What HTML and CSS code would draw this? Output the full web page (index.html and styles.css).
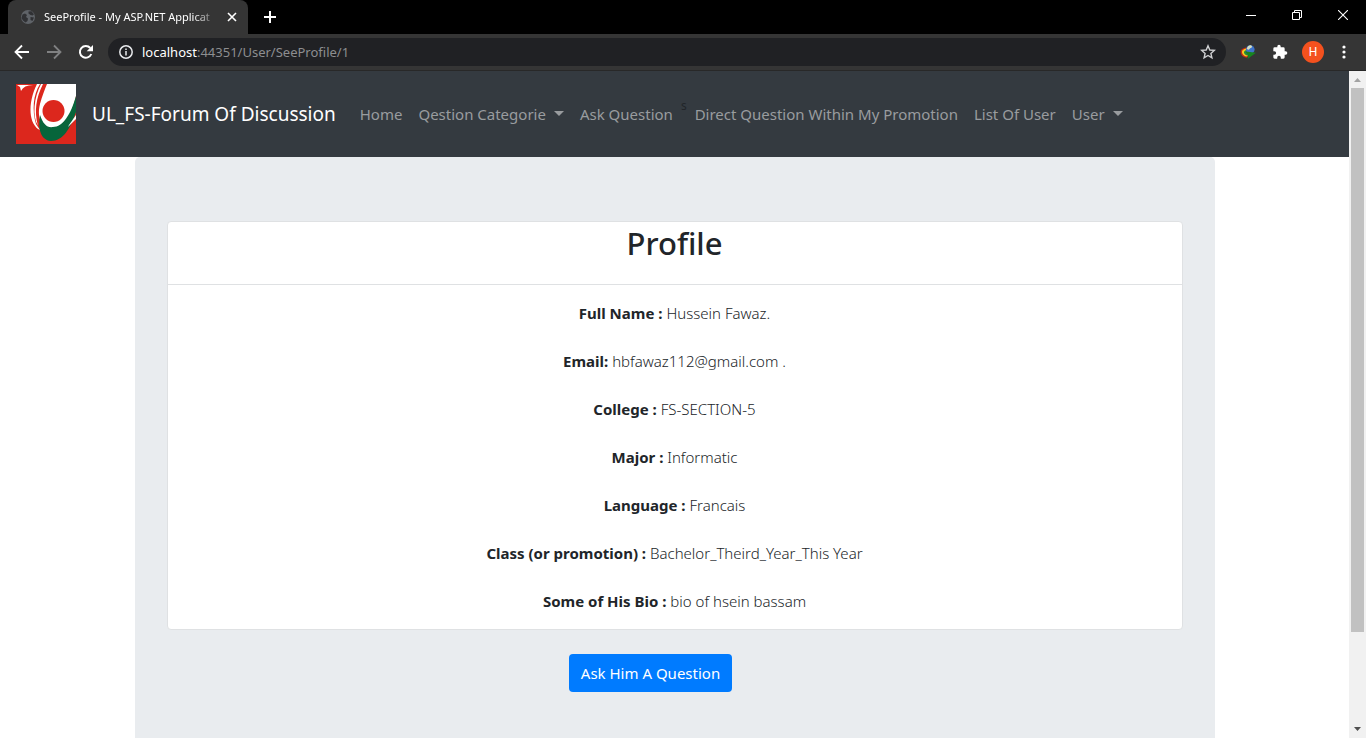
FILE: index.html
```html
<!DOCTYPE html>
<html lang="en">
<head>
<meta charset="utf-8">
<title>SeeProfile - My ASP.NET Application</title>
<link rel="stylesheet" href="styles.css">
</head>
<body>
<header class="browser">
  <div class="tabstrip">
    <div class="tab">
      <svg class="globe" viewBox="0 0 16 16" width="16" height="16"><circle cx="8" cy="8" r="7" fill="#5f6368"/><path d="M2.500 5.500L5 4.500l2 1.500-1 2 2 1.500-.5 2.500-2 1.500-2.500-2L1.500 9zM8.500 2.500l3-.3 2.500 3-1.500 1.300-2-.5-2-1.500zM10.500 8l3.500.5-1.500 3.500-2-1z" fill="#303134"/></svg>
      <span class="tab-title">SeeProfile - My ASP.NET Applicat</span>
      <button class="icon-btn" aria-label="Close tab"><svg viewBox="0 0 10 10" width="10" height="10"><path d="M1 1l8 8M9 1L1 9" stroke="#fff" stroke-width="1.600"/></svg></button>
    </div>
    <button class="icon-btn new-tab" aria-label="New tab"><svg viewBox="0 0 12 12" width="12" height="12"><path d="M6 0v12M0 6h12" stroke="#fff" stroke-width="2"/></svg></button>
    <div class="window-controls">
      <button class="icon-btn" aria-label="Minimize"><svg viewBox="0 0 10 10" width="10" height="10"><path d="M0 5.500h10" stroke="#fff"/></svg></button>
      <button class="icon-btn" aria-label="Restore"><svg viewBox="0 0 10 10" width="10" height="10"><path d="M.5 2.500h7v7h-7zM2.500 2.500v-2h7v7h-2" fill="none" stroke="#fff"/></svg></button>
      <button class="icon-btn" aria-label="Close window"><svg viewBox="0 0 10 10" width="10" height="10"><path d="M0 0l10 10M10 0L0 10" stroke="#fff" stroke-width="1.100"/></svg></button>
    </div>
  </div>
  <div class="toolbar">
    <button class="icon-btn" aria-label="Back"><svg viewBox="0 0 16 16" width="16" height="16"><path d="M15 8H2M8 1.500L1.500 8 8 14.500" fill="none" stroke="#fff" stroke-width="1.800"/></svg></button>
    <button class="icon-btn" aria-label="Forward"><svg viewBox="0 0 16 16" width="16" height="16"><path d="M1 8h13M8 1.500L14.500 8 8 14.500" fill="none" stroke="#808182" stroke-width="1.800"/></svg></button>
    <button class="icon-btn" aria-label="Reload"><svg viewBox="0 0 16 16" width="16" height="16"><path d="M13.300 10A5.900 5.900 0 1 1 12.300 4" fill="none" stroke="#fff" stroke-width="2"/><path d="M15 1v6.300H8.700z" fill="#fff"/></svg></button>
    <div class="address">
      <svg viewBox="0 0 14 14" width="14" height="14"><circle cx="7" cy="7" r="6.200" fill="none" stroke="#e8eaed" stroke-width="1.500"/><path d="M7 6v4.500M7 3.400v1.500" stroke="#e8eaed" stroke-width="1.500"/></svg>
      <span class="url"><b>localhost</b>:44351/User/SeeProfile/1</span>
      <button class="icon-btn" aria-label="Bookmark"><svg viewBox="0 0 16 16" width="16" height="16"><path d="M8 1.800l1.800 4.200 4.500.4-3.400 3 1 4.400L8 11.500l-3.900 2.300 1-4.400-3.400-3 4.500-.4z" fill="none" stroke="#d0d1d3" stroke-width="1.400"/></svg></button>
    </div>
    <div class="extensions">
      <button class="icon-btn" aria-label="Download manager"><svg viewBox="0 0 16 16" width="16" height="16"><path d="M6.500 3.500C2 4 .5 6 .7 8.500c.3 3 3 5 6.300 5.200l1.500-2C5 11.500 3 9 6.500 6z" fill="#c32a15"/><path d="M6.500 4.500C3 5 1.800 6.500 2 8.400c.3 2.200 2.500 3.700 5 4.200l1-1.800C5 10 4.300 8 6.500 6.500z" fill="#f2ca20"/><path d="M6.500 6c-2 .6-2.800 1.500-2.400 3 .5 1.500 2 2.200 3.400 2.600l1-1.600C6 9 6 8 7 7z" fill="#228a3c"/><circle cx="10.300" cy="5.500" r="4.300" fill="#3f74cb"/><path d="M8 2.200c2-1.500 4-.8 4 .5s-2 1-2.500 2.300-2.500.5-2.800-.5z" fill="#d5dfc0"/><path d="M6 7.500l10 1.300-8.500 6.200.8-3.500z" fill="#16851e"/></svg></button>
      <button class="icon-btn" aria-label="Extensions"><svg viewBox="0 0 24 24" width="16" height="16"><path d="M20.500 11H19V7a2 2 0 0 0-2-2h-4V3.500a2.500 2.500 0 0 0-5 0V5H4a2 2 0 0 0-2 2v3.800h1.500a2.700 2.700 0 0 1 0 5.400H2V20a2 2 0 0 0 2 2h3.800v-1.500a2.700 2.700 0 0 1 5.400 0V22H17a2 2 0 0 0 2-2v-4h1.500a2.500 2.500 0 0 0 0-5z" fill="#fff"/></svg></button>
      <button class="avatar" aria-label="Account H">H</button>
      <button class="icon-btn" aria-label="Menu"><svg viewBox="0 0 4 14" width="4" height="14"><circle cx="2" cy="2" r="1.600" fill="#fff"/><circle cx="2" cy="7" r="1.600" fill="#fff"/><circle cx="2" cy="12" r="1.600" fill="#fff"/></svg></button>
    </div>
  </div>
</header>
<div class="viewport">
  <div class="page">
    <nav class="navbar">
      <a class="brand" href="#">
        <svg class="logo" viewBox="0 0 60 60" width="60" height="60"><path d="M0 0h60v60H0z" fill="#dc271d"/><path d="M1 1H20Q8 0 5 7L4 3z" fill="#fff"/><path d="M21 0h3C17 11 16 26 20 40l4 6C13 41 11 20 21 0z" fill="#fff"/><path d="M25 0h2C20 14 18 27 22 42 16 32 18 13 25 0z" fill="#fff"/><path d="M31 0h29v12C56 30 49 44 36 44 24 43 21 32 24 20 26 12 29 5 31 0z" fill="#fff"/><path d="M60 12v16C54 45 47 57 35 57c-11-1-13-13-11-26 3 9 7 13 13 12 10 0 18-13 23-31z" fill="#07653b"/><path d="M53 41l7-10v4l-8 8z" fill="#fff"/><circle cx="37.500" cy="27" r="11" fill="#dc271d"/></svg>
        <span>UL_FS-Forum Of Discussion</span>
      </a>
      <ul class="nav">
        <li><a href="#">Home</a></li>
        <li><a class="caret" href="#">Qestion Categorie</a></li>
        <li><a href="#">Ask Question</a></li>
        <li class="stray">s</li>
        <li><a href="#">Direct Question Within My Promotion</a></li>
        <li><a href="#">List Of User</a></li>
        <li><a class="caret" href="#">User</a></li>
      </ul>
    </nav>
    <main class="jumbotron">
      <section class="card">
        <h1>Profile</h1>
        <div class="details">
          <p><b>Full Name :</b> Hussein Fawaz.</p>
          <p><b>Email:</b> hbfawaz112@gmail.com .</p>
          <p><b>College :</b> FS-SECTION-5</p>
          <p><b>Major :</b> Informatic</p>
          <p><b>Language :</b> Francais</p>
          <p><b>Class (or promotion) :</b> Bachelor_Theird_Year_This Year</p>
          <p><b>Some of His Bio :</b> bio of hsein bassam</p>
        </div>
      </section>
      <div class="actions"><button class="primary">Ask Him A Question</button></div>
    </main>
  </div>
  <div class="scrollbar">
    <svg viewBox="0 0 17 17" width="17" height="17"><path d="M5 11h7L8.500 7z" fill="#a3a3a3"/></svg>
    <div class="track"><div class="thumb"></div></div>
    <svg viewBox="0 0 17 17" width="17" height="17"><path d="M5 6h7l-3.500 4z" fill="#505050"/></svg>
  </div>
</div>
</body>
</html>
```
FILE: styles.css
```css
* { box-sizing: border-box; }
body {
  margin: 0;
  height: 100vh;
  display: flex;
  flex-direction: column;
  overflow: hidden;
  font: 15px/24px "Segoe UI", "Noto Sans", "Open Sans", sans-serif;
  color: #212529;
  background: #fff;
}
button { font: inherit; border: 0; cursor: pointer; }
svg { display: block; flex: none; }
a { color: inherit; text-decoration: none; }

.browser { flex: none; background: #000; color: #fff; }
.icon-btn {
  display: flex;
  align-items: center;
  justify-content: center;
  padding: 0;
  background: none;
}
.tabstrip { display: flex; align-items: center; height: 34px; padding-left: 8px; }
.tab {
  display: flex;
  align-items: center;
  gap: 8px;
  width: 240px;
  height: 34px;
  padding: 0 11px 0 12px;
  background: #353535;
  border-radius: 8px 8px 0 0;
  font-size: 11px;
}
.tab-title {
  flex: 1;
  overflow: hidden;
  white-space: nowrap;
  mask-image: linear-gradient(to right, #000 85%, transparent);
}
.new-tab { width: 44px; height: 34px; }
.window-controls { display: flex; margin-left: auto; padding-bottom: 5px; }
.window-controls .icon-btn { width: 46px; height: 29px; }

.toolbar {
  display: flex;
  align-items: center;
  gap: 16px;
  height: 37px;
  padding: 0 20px 0 14px;
  background: #353535;
  border-bottom: 1px solid #282828;
}
.address {
  flex: 1;
  display: flex;
  align-items: center;
  gap: 9px;
  height: 28px;
  margin-left: -2px;
  padding: 0 10px 0 11px;
  border-radius: 14px;
  background: #202124;
  font-size: 13px;
}
.url { flex: 1; color: #8d8e90; }
.url b { color: #fff; font-weight: 400; }
.extensions { display: flex; align-items: center; gap: 14px; margin-left: -2px; }
.extensions .icon-btn { min-width: 4px; }
.avatar {
  width: 22px;
  height: 22px;
  padding: 0;
  border-radius: 50%;
  background: #f4511e;
  color: #fff;
  font: 12px/22px Roboto, sans-serif;
}
.extensions .icon-btn + .icon-btn { margin-left: 2px; }
.extensions .avatar + .icon-btn { margin-left: 4px; }

.viewport { flex: 1; min-height: 0; display: flex; }
.page { flex: 1; min-width: 0; overflow: hidden; }
.navbar {
  display: flex;
  align-items: center;
  padding: 13px 16px;
  background: #343a40;
  white-space: nowrap;
}
.brand {
  display: flex;
  align-items: center;
  gap: 16px;
  margin-right: 16px;
  color: #fff;
  font-size: 19px;
}
.nav {
  display: flex;
  margin: 0;
  padding: 0;
  list-style: none;
  color: #999c9f;
}
.nav a { display: block; padding: 8px; }
.caret::after {
  content: "";
  display: inline-block;
  margin-left: 8px;
  vertical-align: 4px;
  border: 5px solid transparent;
  border-top-color: currentColor;
  border-bottom: 0;
}
.stray { color: #212529; font-size: 12px; }

.jumbotron {
  max-width: 1080px;
  min-height: 640px;
  margin: 0 auto;
  padding: 64px 32px;
  border-radius: 5px;
  background: #e9ecef;
}
.card {
  border: 1px solid #dfe1e3;
  border-radius: 4px;
  background: #fff;
  text-align: center;
}
.card h1 {
  margin: 0;
  padding: 2px 0 22px;
  border-bottom: 1px solid #dfe1e3;
  font-size: 31px;
  line-height: 38px;
  font-weight: 500;
}
.details {
  display: flex;
  flex-direction: column;
  gap: 24px;
  padding: 16px 20px;
  font-weight: 300;
}
.details p { margin: 0; }
.details b { font-weight: 700; }
.actions { display: flex; justify-content: center; margin-top: 24px; padding-right: 48px; }
.primary {
  padding: 7px 12px;
  border-radius: 4px;
  background: #007bff;
  color: #fff;
}

.scrollbar { display: flex; flex-direction: column; width: 17px; background: #f1f1f1; }
.track { flex: 1; padding: 0 2px; }
.thumb { height: 86%; background: #c1c1c1; }
```
